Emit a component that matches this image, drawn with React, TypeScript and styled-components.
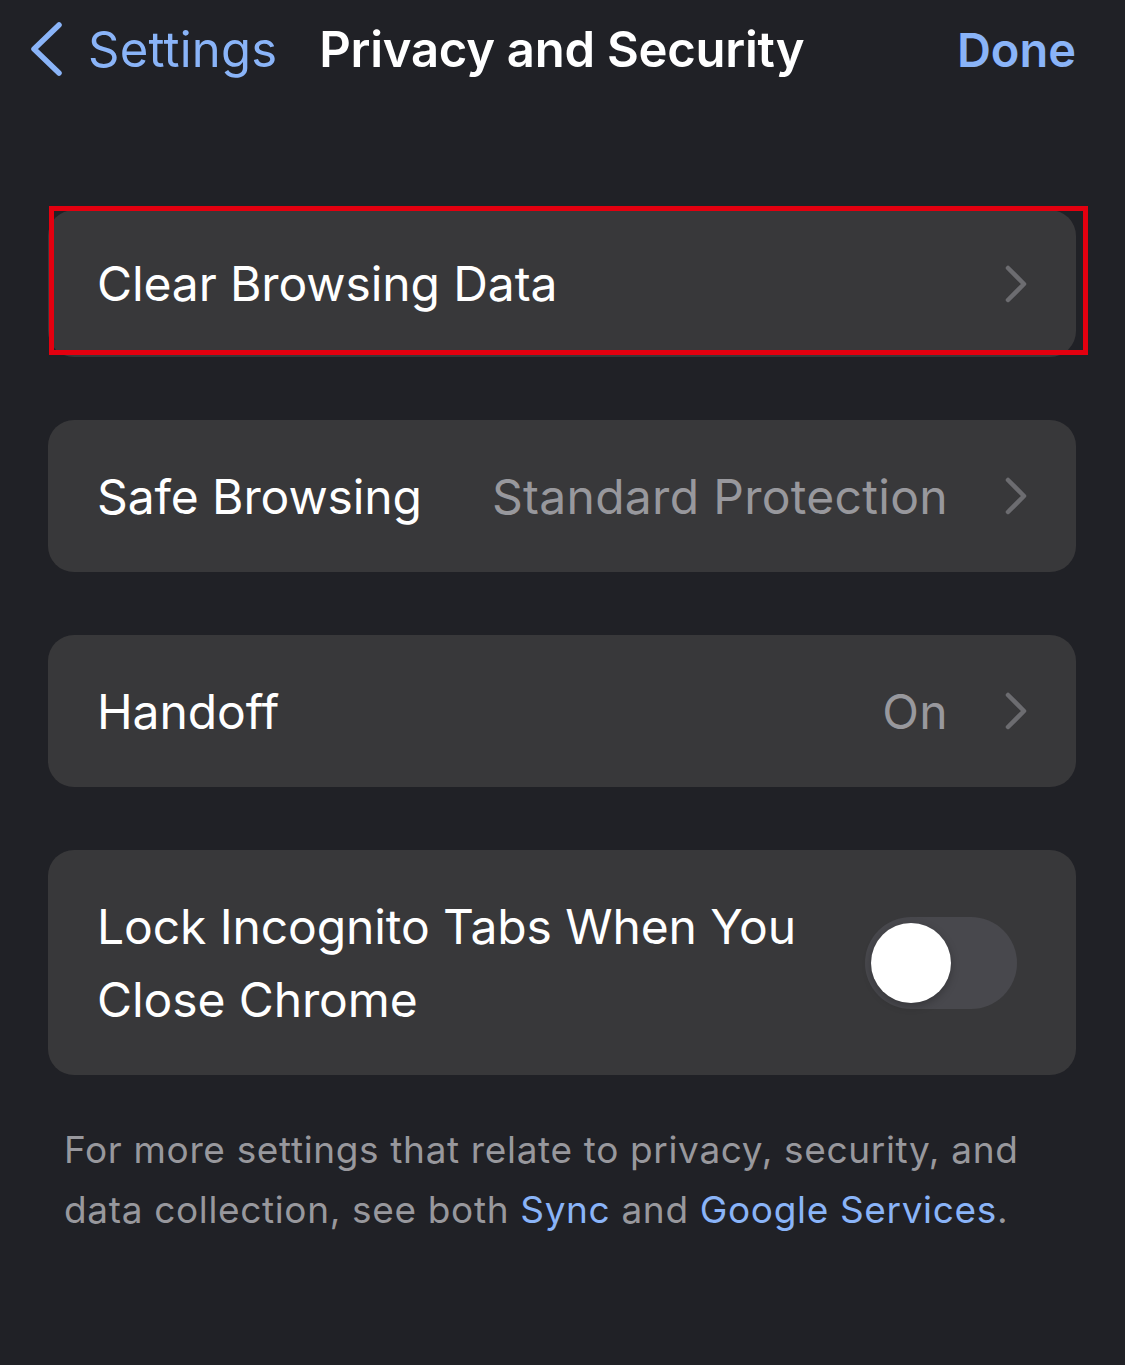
import styled, { createGlobalStyle } from 'styled-components'

const GlobalStyle = createGlobalStyle`
  html, body {
    margin: 0;
    padding: 0;
    background: #202126;
  }
  body {
    font-family: Inter, 'Noto Sans', 'Liberation Sans', sans-serif;
    -webkit-font-smoothing: antialiased;
  }
`

const Page = styled.div`
  width: 1125px;
  min-height: 1365px;
  background: #202126;
  color: #ffffff;
  box-sizing: border-box;
`

const NavBar = styled.div`
  height: 98px;
  display: flex;
  align-items: center;
  padding: 0 49px 0 28px;
  box-sizing: border-box;
`

const BackButton = styled.div`
  display: flex;
  align-items: center;
  gap: 24px;
  color: #8ab4f8;
  font-size: 49px;
  font-weight: 400;
  letter-spacing: 0.2px;
`

const Title = styled.div`
  margin-left: 42px;
  font-size: 49px;
  font-weight: 600;
  letter-spacing: -0.25px;
  color: #ffffff;
`

const DoneButton = styled.div`
  margin-left: auto;
  font-size: 47px;
  font-weight: 600;
  color: #8ab4f8;
`

const List = styled.div`
  display: flex;
  flex-direction: column;
  gap: 63px;
  padding: 112px 49px 0 48px;
`

const Highlighted = styled.div`
  position: relative;
`

const RedBox = styled.div`
  position: absolute;
  left: 1px;
  top: -4px;
  width: 1039px;
  height: 149px;
  border: 5px solid #e3000f;
  box-sizing: border-box;
  pointer-events: none;
`

const Card = styled.div<{ $h: number }>`
  height: ${p => p.$h}px;
  background: #38383a;
  border-radius: 26px;
  display: flex;
  align-items: center;
  padding: 0 48px 0 49px;
  box-sizing: border-box;
`

const Label = styled.div`
  font-size: 48px;
  line-height: 73px;
  color: #ffffff;
  letter-spacing: -0.1px;
  flex: 1;
`

const Value = styled.div`
  font-size: 48px;
  color: #98989d;
  letter-spacing: 0.3px;
  margin-right: 56px;
`

const Track = styled.div<{ $on: boolean }>`
  width: 152px;
  height: 92px;
  border-radius: 46px;
  background: ${p => (p.$on ? '#34c759' : '#48484d')};
  display: flex;
  align-items: center;
  padding: 0 6px;
  box-sizing: border-box;
  justify-content: ${p => (p.$on ? 'flex-end' : 'flex-start')};
  margin-right: 11px;
`

const Knob = styled.div`
  width: 80px;
  height: 80px;
  border-radius: 50%;
  background: #ffffff;
  box-shadow: 0 3px 8px rgba(0, 0, 0, 0.25);
`

const Footer = styled.p`
  margin: 45px 50px 0 64px;
  font-size: 37px;
  line-height: 60px;
  color: #98989d;
  letter-spacing: 0.65px;
`

const Link = styled.span`
  color: #8ab4f8;
`

function BackChevron() {
  return (
    <svg width="36" height="56" viewBox="0 0 36 56">
      <path
        d="M31 4 L6 28 L31 52"
        fill="none"
        stroke="#8ab4f8"
        strokeWidth="5.5"
        strokeLinecap="round"
        strokeLinejoin="round"
      />
    </svg>
  )
}

function RowChevron() {
  return (
    <svg width="24" height="38" viewBox="0 0 24 38">
      <path
        d="M4 3 L20 19 L4 35"
        fill="none"
        stroke="#6c6c70"
        strokeWidth="4.5"
        strokeLinecap="round"
        strokeLinejoin="round"
      />
    </svg>
  )
}

export default function App() {
  return (
    <Page>
      <GlobalStyle />
      <NavBar>
        <BackButton>
          <BackChevron />
          <span>Settings</span>
        </BackButton>
        <Title>Privacy and Security</Title>
        <DoneButton>Done</DoneButton>
      </NavBar>

      <List>
        <Highlighted>
          <Card $h={147}>
            <Label>Clear Browsing Data</Label>
            <RowChevron />
          </Card>
          <RedBox />
        </Highlighted>

        <Card $h={152}>
          <Label>Safe Browsing</Label>
          <Value>Standard Protection</Value>
          <RowChevron />
        </Card>

        <Card $h={152}>
          <Label>Handoff</Label>
          <Value>On</Value>
          <RowChevron />
        </Card>

        <Card $h={225}>
          <Label>
            Lock Incognito Tabs When You
            <br />
            Close Chrome
          </Label>
          <Track $on={false}>
            <Knob />
          </Track>
        </Card>
      </List>

      <Footer>
        For more settings that relate to privacy, security, and data collection, see both{' '}
        <Link>Sync</Link> and <Link>Google Services</Link>.
      </Footer>
    </Page>
  )
}
